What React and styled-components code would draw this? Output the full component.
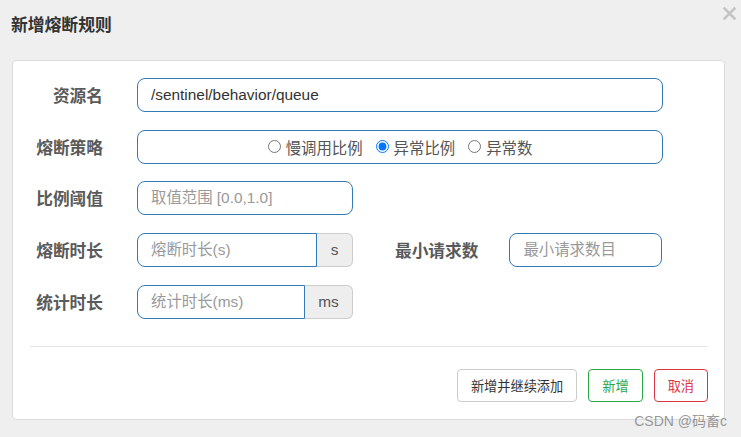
import React, {useState} from 'react';
import styled, {createGlobalStyle} from 'styled-components';

const GlobalStyle = createGlobalStyle`
html, body {
  margin: 0;
  padding: 0;
  background: #efefef;
  font-family: "Liberation Sans", "Noto Sans CJK SC", sans-serif;
}
`;

const App = () => {
    const [strategy, setStrategy] = useState('ratio');
    const options = [
        {value: 'slow', label: '慢调用比例'},
        {value: 'ratio', label: '异常比例'},
        {value: 'count', label: '异常数'},
    ];
    return (
        <Page>
            <GlobalStyle />
            <Header>
                <Title>新增熔断规则</Title>
                <Close aria-label="close">
                    <svg width="13" height="13" viewBox="0 0 13 13">
                        <path d="M1.5 1.5 L11.5 11.5 M11.5 1.5 L1.5 11.5" stroke="#c4c4c4" strokeWidth="2.6" strokeLinecap="square" />
                    </svg>
                </Close>
            </Header>
            <Card>
                <Form>
                    <Row>
                        <Label>资源名</Label>
                        <TextInput $width="526px" defaultValue="/sentinel/behavior/queue" />
                    </Row>
                    <Row>
                        <Label>熔断策略</Label>
                        <RadioBox>
                            {options.map((o) => (
                                <RadioItem key={o.value}>
                                    <Radio type="radio" name="strategy" checked={strategy === o.value} onChange={() => setStrategy(o.value)} />
                                    {o.label}
                                </RadioItem>
                            ))}
                        </RadioBox>
                    </Row>
                    <Row>
                        <Label>比例阈值</Label>
                        <TextInput $width="216px" placeholder="取值范围 [0.0,1.0]" />
                    </Row>
                    <Row>
                        <Label>熔断时长</Label>
                        <Group>
                            <GroupInput placeholder="熔断时长(s)" />
                            <Addon $width="36px">s</Addon>
                        </Group>
                        <SideLabel>最小请求数</SideLabel>
                        <TextInput $width="153px" placeholder="最小请求数目" />
                    </Row>
                    <Row>
                        <Label>统计时长</Label>
                        <Group>
                            <GroupInput placeholder="统计时长(ms)" />
                            <Addon $width="48px">ms</Addon>
                        </Group>
                    </Row>
                </Form>
                <Divider />
                <Footer>
                    <Button $color="#333" $border="#ccc">新增并继续添加</Button>
                    <Button $color="#28a745" $border="#28a745">新增</Button>
                    <Button $color="#dc3545" $border="#dc3545">取消</Button>
                </Footer>
            </Card>
            <Watermark>CSDN @码畜c</Watermark>
        </Page>
    );
};
export default App;

const Page = styled.div`
position: relative;
width: 741px;
height: 437px;
padding: 0 16px 0 12px;
box-sizing: border-box;
overflow: hidden;
`;

const Header = styled.div`
height: 60px;
display: flex;
align-items: flex-start;
justify-content: space-between;
`;

const Title = styled.h4`
margin: 16px 0 0 -1px;
font-size: 16.8px;
font-weight: bold;
color: #333;
line-height: 20px;
`;

const Close = styled.button`
border: none;
background: none;
padding: 0;
margin: 7px -11px 0 0;
display: flex;
cursor: pointer;
`;

const Card = styled.div`
background: #fff;
border: 1px solid #dcdcdc;
border-radius: 4px;
height: 360px;
box-sizing: border-box;
padding: 17px 16px 0 17px;
`;

const Form = styled.div`
display: flex;
flex-direction: column;
gap: 17.7px;
`;

const Row = styled.div`
display: flex;
align-items: center;
height: 34px;
`;

const Label = styled.label`
width: 73px;
margin-right: 34px;
text-align: right;
font-size: 16.7px;
font-weight: bold;
color: #5a5a5a;
white-space: nowrap;
`;

const SideLabel = styled(Label)`
width: auto;
margin-left: 42px;
margin-right: 31px;
`;

const TextInput = styled.input`
width: ${(p) => p.$width};
height: 34px;
box-sizing: border-box;
border: 1px solid #337ab7;
border-radius: 8px;
padding: 0 13px;
font-family: inherit;
font-size: 15.4px;
color: #333;
outline: none;
&::placeholder {
  color: #999;
}
`;

const RadioBox = styled.div`
width: 526px;
height: 34px;
box-sizing: border-box;
border: 1px solid #337ab7;
border-radius: 8px;
display: flex;
align-items: center;
justify-content: center;
gap: 13px;
font-size: 15.4px;
color: #555;
`;

const RadioItem = styled.label`
display: flex;
align-items: center;
gap: 5px;
`;

const Radio = styled.input`
margin: 0;
width: 13px;
height: 13px;
accent-color: #0075ff;
`;

const Group = styled.div`
display: flex;
width: 216px;
height: 34px;
`;

const GroupInput = styled.input`
flex: 1;
min-width: 0;
box-sizing: border-box;
border: 1px solid #337ab7;
border-radius: 8px 0 0 8px;
padding: 0 13px;
font-family: inherit;
font-size: 15.4px;
color: #333;
outline: none;
&::placeholder {
  color: #999;
}
`;

const Addon = styled.span`
display: flex;
align-items: center;
justify-content: center;
width: ${(p) => p.$width};
box-sizing: border-box;
background: #eee;
border: 1px solid #ccc;
border-left: none;
border-radius: 0 6px 6px 0;
font-size: 15.4px;
color: #555;
`;

const Divider = styled.hr`
margin: 27px 0 0 0;
border: none;
border-top: 1px solid #e5e5e5;
`;

const Footer = styled.div`
display: flex;
justify-content: flex-end;
gap: 11px;
margin-top: 22px;
`;

const Button = styled.button`
height: 33px;
padding: 0 13px;
background: #fff;
border: 1px solid ${(p) => p.$border};
border-radius: 4px;
color: ${(p) => p.$color};
font-family: inherit;
font-size: 13.2px;
cursor: pointer;
`;

const Watermark = styled.div`
position: absolute;
right: 14px;
bottom: 7px;
font-size: 14px;
color: rgba(120, 120, 120, 0.75);
pointer-events: none;
`;
